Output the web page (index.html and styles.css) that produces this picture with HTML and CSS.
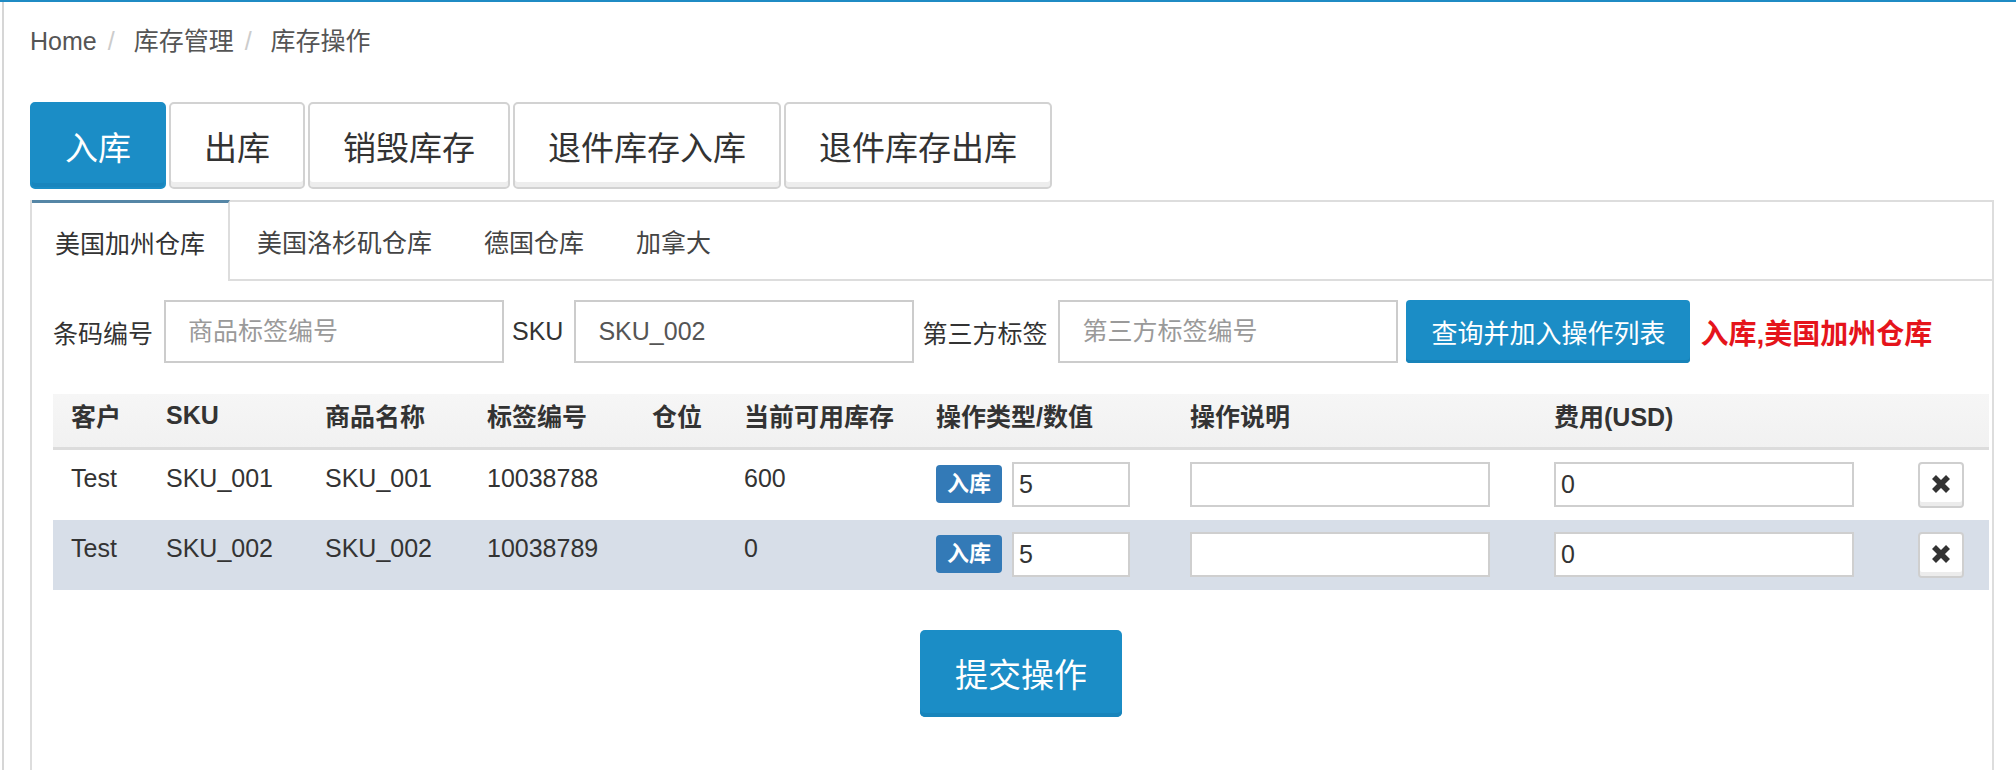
FILE: index.html
```html
<!DOCTYPE html>
<html lang="zh-CN">
<head>
<meta charset="utf-8">
<title>库存操作</title>
<link rel="stylesheet" href="styles.css">
</head>
<body>
<div class="page">
  <ol class="breadcrumb">
    <li>Home</li>
    <li>库存管理</li>
    <li>库存操作</li>
  </ol>

  <div class="op-tabs">
    <button class="op-btn active">入库</button>
    <button class="op-btn">出库</button>
    <button class="op-btn">销毁库存</button>
    <button class="op-btn">退件库存入库</button>
    <button class="op-btn">退件库存出库</button>
  </div>

  <div class="panel">
    <div class="wh-tabs">
      <div class="wh-tab active">美国加州仓库</div>
      <div class="wh-rest">
        <div class="wh-tab">美国洛杉矶仓库</div>
        <div class="wh-tab">德国仓库</div>
        <div class="wh-tab">加拿大</div>
      </div>
    </div>

    <div class="panel-body">
      <div class="search-row">
        <label class="field-label">条码编号</label>
        <input class="field" type="text" placeholder="商品标签编号">
        <label class="field-label">SKU</label>
        <input class="field" type="text" value="SKU_002">
        <label class="field-label">第三方标签</label>
        <input class="field" type="text" placeholder="第三方标签编号">
        <button class="btn-primary">查询并加入操作列表</button>
        <span class="hint">入库,美国加州仓库</span>
      </div>

      <table class="ops">
        <colgroup>
          <col class="c1"><col class="c2"><col class="c3"><col class="c4"><col class="c5">
          <col class="c6"><col class="c7"><col class="c8"><col class="c9"><col>
        </colgroup>
        <thead>
          <tr>
            <th>客户</th>
            <th>SKU</th>
            <th>商品名称</th>
            <th>标签编号</th>
            <th>仓位</th>
            <th>当前可用库存</th>
            <th>操作类型/数值</th>
            <th>操作说明</th>
            <th>费用(USD)</th>
            <th></th>
          </tr>
        </thead>
        <tbody>
          <tr>
            <td>Test</td>
            <td>SKU_001</td>
            <td>SKU_001</td>
            <td>10038788</td>
            <td></td>
            <td>600</td>
            <td><div class="op-cell"><span class="badge">入库</span><input class="cell-input qty" type="text" value="5"></div></td>
            <td><input class="cell-input note" type="text"></td>
            <td><input class="cell-input fee" type="text" value="0"></td>
            <td><button class="del-btn" aria-label="删除"><svg viewBox="0 0 24 24" width="24" height="24"><path d="M5 5 L19 19 M19 5 L5 19" stroke="#333" stroke-width="5.6" fill="none"/></svg></button></td>
          </tr>
          <tr class="alt">
            <td>Test</td>
            <td>SKU_002</td>
            <td>SKU_002</td>
            <td>10038789</td>
            <td></td>
            <td>0</td>
            <td><div class="op-cell"><span class="badge">入库</span><input class="cell-input qty" type="text" value="5"></div></td>
            <td><input class="cell-input note" type="text"></td>
            <td><input class="cell-input fee" type="text" value="0"></td>
            <td><button class="del-btn" aria-label="删除"><svg viewBox="0 0 24 24" width="24" height="24"><path d="M5 5 L19 19 M19 5 L5 19" stroke="#333" stroke-width="5.6" fill="none"/></svg></button></td>
          </tr>
        </tbody>
      </table>

      <div class="submit-row">
        <button class="btn-submit">提交操作</button>
      </div>
    </div>
  </div>
</div>
</body>
</html>
```

FILE: styles.css
```css
html, body {
  margin: 0;
  padding: 0;
}

body {
  font-family: "Liberation Sans", "Noto Sans CJK SC", sans-serif;
  color: #333;
  background: #fff;
  border-top: 2px solid #1f8bc4;
  overflow: hidden;
}

.page {
  margin-left: 2px;
  border-left: 2px solid #d6d6d6;
  padding: 0 22px 0 26px;
  min-height: 768px;
  box-sizing: border-box;
}

/* breadcrumb */
.breadcrumb {
  list-style: none;
  margin: 0;
  padding: 21px 0 0 0;
  display: flex;
  font-size: 25px;
  line-height: 36px;
  color: #555;
}

.breadcrumb li + li::before {
  content: "/";
  color: #ccc;
  padding: 0 19px 0 11px;
}

/* operation buttons */
.op-tabs {
  display: flex;
  gap: 3px;
  margin-top: 43px;
}

.op-btn {
  height: 87px;
  padding: 0 33px;
  font-family: inherit;
  font-size: 33px;
  color: #333;
  background: #fff;
  border: 2px solid #d2d2d2;
  border-radius: 5px;
  box-shadow: inset 0 -5px 0 #ededed;
  cursor: pointer;
}

.op-btn.active {
  background: #1b8dc6;
  border-color: #1b8dc6;
  color: #fff;
  box-shadow: inset 0 -4px 0 #1985bd;
}

/* panel */
.panel {
  margin-top: 11px;
  border: 2px solid #ddd;
  border-top: none;
  min-height: 600px;
}

.wh-tabs {
  display: flex;
  height: 81px;
}

.wh-tab {
  display: flex;
  align-items: center;
  font-size: 25px;
  color: #444;
  padding: 0 25px;
  margin-left: 2px;
}

.wh-tab.active {
  margin-left: 0;
  padding: 0 23px;
  border-top: 3px solid #5586a6;
  border-right: 2px solid #ddd;
  color: #333;
  background: #fff;
}

.wh-rest {
  flex: 1;
  display: flex;
  border-top: 2px solid #ddd;
  border-bottom: 2px solid #ddd;
}

.panel-body {
  padding: 19px 3px 0 21px;
}

/* search row */
.search-row {
  display: flex;
  align-items: center;
  height: 63px;
}

.field-label {
  font-size: 25px;
  color: #333;
  margin-right: 11px;
}

.field {
  width: 340px;
  height: 63px;
  box-sizing: border-box;
  border: 2px solid #ccc;
  padding: 0 22px;
  font-family: inherit;
  font-size: 25px;
  color: #555;
  margin-right: 8px;
  outline: none;
}

.field::placeholder {
  color: #9a9a9a;
}

.btn-primary {
  height: 63px;
  padding: 0 25px;
  font-family: inherit;
  font-size: 26px;
  color: #fff;
  background: #1b8dc6;
  border: none;
  border-radius: 4px;
  box-shadow: inset 0 -3px 0 #1883b9;
  margin-right: 10px;
}

.hint {
  font-size: 28px;
  font-weight: bold;
  color: #e5141b;
}

/* table */
.ops {
  margin-top: 31px;
  width: 100%;
  border-collapse: collapse;
  table-layout: fixed;
  font-size: 25px;
}

.c1 { width: 95px; }
.c2 { width: 159px; }
.c3 { width: 162px; }
.c4 { width: 165px; }
.c5 { width: 92px; }
.c6 { width: 192px; }
.c7 { width: 254px; }
.c8 { width: 364px; }
.c9 { width: 364px; }

.ops th {
  height: 54px;
  box-sizing: border-box;
  padding: 0 18px 10px 18px;
  text-align: left;
  font-weight: bold;
  color: #333;
  background: linear-gradient(#f6f6f6, #f1f1f1);
  border-bottom: 3px solid #dcdcdc;
  vertical-align: middle;
  white-space: nowrap;
}

.ops td {
  padding: 12px 18px;
  line-height: 32px;
  vertical-align: top;
  color: #333;
  white-space: nowrap;
}

.ops tr.alt td {
  background: #d7dee8;
}

.op-cell {
  display: flex;
  align-items: center;
  gap: 10px;
}

.badge {
  display: inline-block;
  height: 38px;
  line-height: 38px;
  padding: 0 11px;
  font-size: 22px;
  font-weight: bold;
  color: #fff;
  background: #337ab7;
  border-radius: 4px;
}

.cell-input {
  display: block;
  height: 45px;
  box-sizing: border-box;
  border: 2px solid #cfcfcf;
  padding: 0 5px;
  font-family: inherit;
  font-size: 25px;
  color: #333;
  background: #fff;
  outline: none;
}

.qty { width: 118px; }
.note { width: 300px; }
.fee { width: 300px; }

.del-btn {
  display: flex;
  align-items: center;
  justify-content: center;
  width: 46px;
  height: 46px;
  padding: 0 0 2px 0;
  background: #fff;
  border: 2px solid #cfcfcf;
  border-radius: 4px;
  box-shadow: inset 0 -4px 0 #ececec;
}

/* submit */
.submit-row {
  display: flex;
  justify-content: center;
  margin-top: 40px;
}

.btn-submit {
  height: 87px;
  padding: 0 35px;
  font-family: inherit;
  font-size: 33px;
  color: #fff;
  background: #1b8dc6;
  border: none;
  border-radius: 5px;
  box-shadow: inset 0 -4px 0 #1884bb;
}
```
